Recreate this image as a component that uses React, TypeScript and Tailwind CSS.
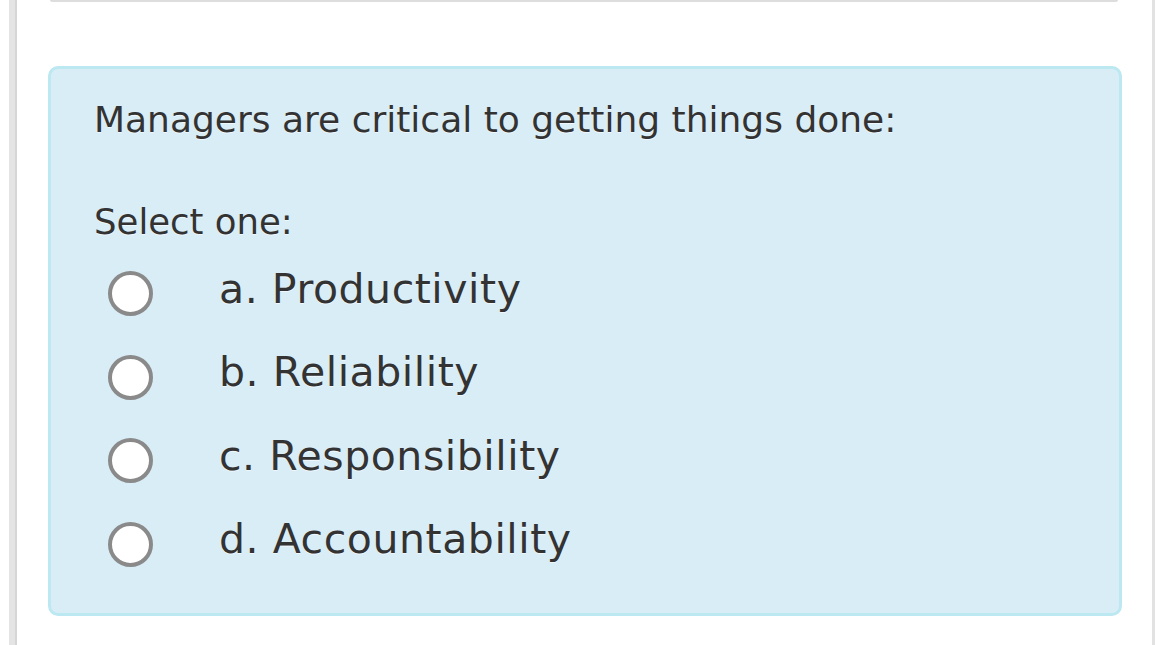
const options = [
  "a. Productivity",
  "b. Reliability",
  "c. Responsibility",
  "d. Accountability",
];

function Radio() {
  return (
    <span className="block w-[45px] h-[45px] shrink-0 rounded-full bg-white border-[4px] border-[#8a8a8a] mt-[9px]" />
  );
}

export default function App() {
  return (
    <div
      className="flex min-h-[645px] w-[1170px] bg-white text-[#333333] overflow-hidden"
      style={{ fontFamily: '"DejaVu Sans", Verdana, sans-serif' }}
    >
      {/* left gutter bar */}
      <div className="w-[9px] shrink-0" />
      <div className="w-[8px] shrink-0 bg-[#e4e4e4] border-r-2 border-[#d6d6d6]" />

      {/* main column */}
      <div className="flex-1 flex flex-col">
        <div className="ml-[33px] mr-[34px] h-[2px] bg-[#dddddd] rounded-b-full" />

        <div className="mt-[64px] ml-[31px] mr-[30px] rounded-[10px] border-[3px] border-[#bce8f1] bg-[#d9edf7] pl-[43px] pt-[23.5px] pb-[31px] [text-shadow:0_1px_0_rgba(255,255,255,0.6)]">
          <p className="text-[36px] leading-[54px]">Managers are critical to getting things done:</p>

          <p className="mt-[52px] mb-[3px] text-[35.5px] leading-[46px]">Select one:</p>

          <div className="flex flex-col">
            {options.map(o => (
              <label key={o} className="flex items-center h-[83.5px] pl-[14px]">
                <Radio />
                <span className="ml-[66px] text-[41px] leading-[83.5px] tracking-[0.55px]">{o}</span>
              </label>
            ))}
          </div>
        </div>
      </div>

      {/* right gutter bar */}
      <div className="w-[3px] shrink-0 bg-[#e2e2e2]" />
      <div className="w-[15px] shrink-0" />
    </div>
  );
}
